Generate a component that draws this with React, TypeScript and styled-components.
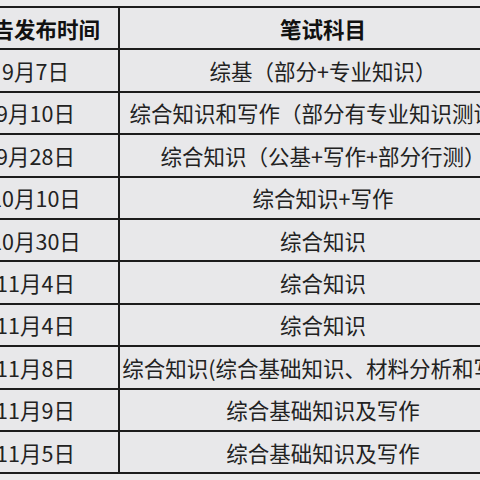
import React from "react";
import styled, { createGlobalStyle } from "styled-components";

const rows: [string, string][] = [
  ["9月7日", "综基（部分+专业知识）"],
  ["9月10日", "综合知识和写作（部分有专业知识测试）"],
  ["9月28日", "综合知识（公基+写作+部分行测）"],
  ["10月10日", "综合知识+写作"],
  ["10月30日", "综合知识"],
  ["11月4日", "综合知识"],
  ["11月4日", "综合知识"],
  ["11月8日", "综合知识(综合基础知识、材料分析和写作)"],
  ["11月9日", "综合基础知识及写作"],
  ["11月5日", "综合基础知识及写作"],
];

const App = () => {
  return (
    <Page>
      <GlobalStyle />
      <Table>
        <Cell $head>公告发布时间</Cell>
        <Cell $head>笔试科目</Cell>
        {rows.map(([date, subject], i) => (
          <React.Fragment key={i}>
            <Cell>{date}</Cell>
            <Cell>{subject}</Cell>
          </React.Fragment>
        ))}
      </Table>
    </Page>
  );
};
export default App;

const GlobalStyle = createGlobalStyle`
  html, body {
    margin: 0;
    padding: 0;
    background: #eaeaeb;
    overflow: hidden;
  }
`;

const Page = styled.main`
  width: 480px;
  height: 480px;
  overflow: hidden;
  padding-top: 6px;
  box-sizing: border-box;
`;

const Table = styled.div`
  display: grid;
  grid-template-columns: 167px 408px;
  grid-auto-rows: 42.4px;
  width: max-content;
  margin-left: -49px;
  border-top: 2px solid #1c1c1c;
  border-left: 2px solid #1c1c1c;
  background: #e8e8ea;
`;

const Cell = styled.div<{ $head?: boolean }>`
  display: flex;
  align-items: center;
  justify-content: center;
  white-space: nowrap;
  border-right: 2px solid #1c1c1c;
  border-bottom: 2px solid #1c1c1c;
  font-family: "Noto Sans CJK SC", "Noto Sans", sans-serif;
  font-size: 21.5px;
  font-weight: ${(p) => (p.$head ? 700 : 400)};
  color: ${(p) => (p.$head ? "#111" : "#222")};
  overflow: hidden;
`;
